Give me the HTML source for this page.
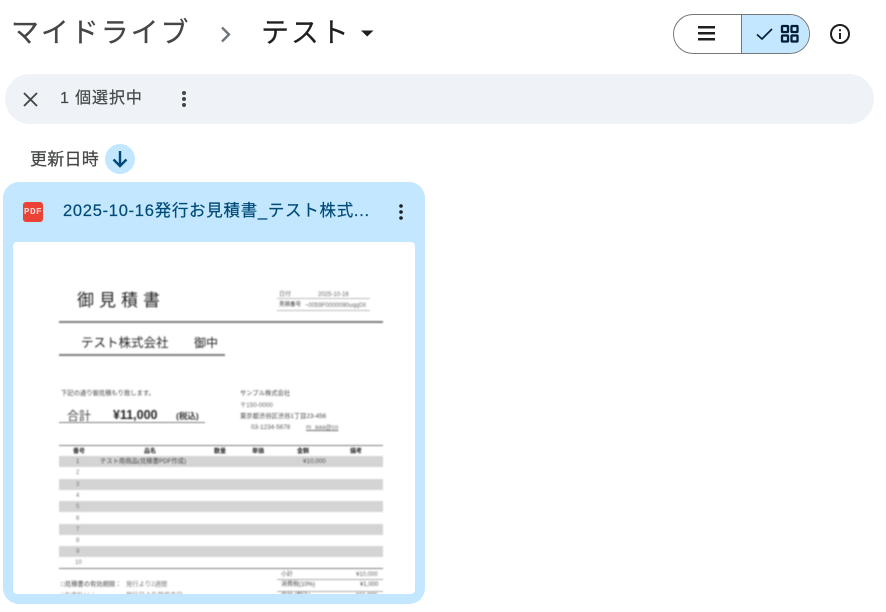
<!DOCTYPE html>
<html lang="ja"><head><meta charset="utf-8"><style>
html,body{margin:0;padding:0;width:886px;height:612px;background:#fff;overflow:hidden}
body{position:relative;font-family:"Liberation Sans","Noto Sans CJK JP",sans-serif}
.a{position:absolute;white-space:nowrap;line-height:1}
.d{position:absolute;white-space:nowrap;line-height:1;color:#222;font-family:"Liberation Sans","Noto Sans CJK JP",sans-serif}
.r{position:absolute;background:#7d7d7d}
.s{position:absolute;left:46px;width:324px;height:11px;background:#d4d4d4}
#doc{position:absolute;left:13px;top:242px;width:402px;height:352px;background:#fff;border-radius:4px;overflow:hidden}
#in{position:absolute;left:-13px;top:-242px;width:886px;height:612px;filter:blur(.8px)}
#in .s{left:59px}
</style></head><body>
<div class="a" style="left:11px;top:19px;font-size:28px;letter-spacing:1.9px;color:#444746;-webkit-text-stroke:.2px #444746">マイドライブ</div>
<svg class="a" style="left:215px;top:22px" width="22" height="24" viewBox="0 0 22 24"><path d="M7 5.500L14 12.500L7 19.500" fill="none" stroke="#70757a" stroke-width="2.400"/></svg>
<div class="a" style="left:261px;top:19px;font-size:28px;letter-spacing:1.9px;color:#1f1f1f;-webkit-text-stroke:.2px #1f1f1f">テスト</div>
<svg class="a" style="left:361px;top:30px" width="13" height="7"><path d="M0 0.500H12.500L6.200 6.500Z" fill="#1f1f1f"/></svg>

<div class="a" style="left:673px;top:14px;width:137px;height:40px;box-sizing:border-box;border:1px solid #747775;border-radius:20px;overflow:hidden;background:#fff">
<div style="position:absolute;left:67px;top:0;width:1px;height:38px;background:#747775"></div>
<div style="position:absolute;left:68px;top:0;width:68px;height:38px;background:#c2e7ff"></div>
</div>
<svg class="a" style="left:698px;top:25px" width="18" height="17"><path d="M0 1h17v2.500H0zM0 7h17v2.500H0zM0 13h17v2.500H0z" fill="#1f1f1f"/></svg>
<svg class="a" style="left:755px;top:27px" width="20" height="14"><path d="M2 7.500L7 12L17 2" fill="none" stroke="#001d35" stroke-width="1.700"/></svg>
<svg class="a" style="left:780px;top:24px" width="20" height="20" viewBox="0 0 20 20"><g fill="none" stroke="#001d35" stroke-width="2.300"><rect x="2" y="2" width="6" height="6" rx=".6"/><rect x="11.500" y="2" width="6" height="6" rx=".6"/><rect x="2" y="11.500" width="6" height="6" rx=".6"/><rect x="11.500" y="11.500" width="6" height="6" rx=".6"/></g></svg>
<svg class="a" style="left:829px;top:23px" width="22" height="22" viewBox="0 0 22 22"><circle cx="11" cy="11" r="9" fill="none" stroke="#1f1f1f" stroke-width="2"/><path d="M10 10h2v6h-2zM10 6.200h2v2h-2z" fill="#1f1f1f"/></svg>

<div class="a" style="left:5px;top:74px;width:869px;height:50px;border-radius:25px;background:#eff3f8"></div>
<svg class="a" style="left:22px;top:91px" width="17" height="17"><path d="M2 2L15 15M15 2L2 15" stroke="#444746" stroke-width="1.900" fill="none"/></svg>
<div class="a" style="left:60px;top:91px;font-size:16px;letter-spacing:.9px;color:#444746;-webkit-text-stroke:.2px #444746">1 個選択中</div>
<svg class="a" style="left:181px;top:90px" width="6" height="18"><circle cx="3" cy="3" r="2" fill="#444746"/><circle cx="3" cy="9" r="2" fill="#444746"/><circle cx="3" cy="15" r="2" fill="#444746"/></svg>

<div class="a" style="left:30px;top:151px;font-size:17px;letter-spacing:.25px;color:#444746;-webkit-text-stroke:.2px #444746">更新日時</div>
<div class="a" style="left:105px;top:144px;width:30px;height:30px;border-radius:50%;background:#c2e7ff"></div>
<svg class="a" style="left:112px;top:150px" width="16" height="18"><path d="M8 1V16M1.500 9.500L8 16L14.500 9.500" fill="none" stroke="#004a77" stroke-width="2.400"/></svg>

<div class="a" style="left:3px;top:182px;width:422px;height:422px;border-radius:16px;background:#c2e7ff"></div>
<div class="a" style="left:23px;top:202px;width:20px;height:20px;border-radius:3px;background:#ea4335"></div>
<div class="a" style="left:23px;top:207px;width:20px;text-align:center;font-size:9.500px;font-weight:700;letter-spacing:.4px;color:#f6d7d5;font-family:'Liberation Mono',monospace">PDF</div>
<div class="a" style="left:63px;top:203px;font-size:16.500px;letter-spacing:.72px;color:#004a77;-webkit-text-stroke:.2px #004a77">2025-10-16発行お見積書_テスト株式...</div>
<svg class="a" style="left:398px;top:203px" width="6" height="18"><circle cx="3" cy="3" r="1.800" fill="#1f1f1f"/><circle cx="3" cy="9" r="1.800" fill="#1f1f1f"/><circle cx="3" cy="15" r="1.800" fill="#1f1f1f"/></svg>

<div id="doc"><div id="in">
<div class="d" style="left:77px;top:292px;font-size:17px;letter-spacing:5px">御見積書</div>
<div class="d" style="left:279px;top:292px;font-size:6px;color:#666">日付</div>
<div class="d" style="left:318px;top:292px;font-size:6px;color:#666">2025-10-16</div>
<div class="d" style="left:279px;top:303px;font-size:5.500px;color:#333">見積番号</div>
<div class="d" style="left:305px;top:303px;font-size:6px;color:#666">~0059F0000090uqq0X</div>
<div class="r" style="left:277px;top:298px;width:93px;height:1px;background:#bbb"></div>
<div class="r" style="left:277px;top:310px;width:93px;height:1px;background:#bbb"></div>
<div class="r" style="left:59px;top:321px;width:324px;height:1.500px"></div>
<div class="d" style="left:81px;top:337px;font-size:12.500px">テスト株式会社</div>
<div class="d" style="left:194px;top:337px;font-size:12px">御中</div>
<div class="r" style="left:59px;top:354px;width:166px;height:1.500px"></div>
<div class="d" style="left:61px;top:391px;font-size:6.300px;color:#444">下記の通り御見積もり致します。</div>
<div class="d" style="left:240px;top:391px;font-size:6.300px;color:#444">サンプル株式会社</div>
<div class="d" style="left:240px;top:403px;font-size:6.300px;color:#666">〒150-0000</div>
<div class="d" style="left:240px;top:414px;font-size:6.300px;color:#444">東京都渋谷区渋谷1丁目23-456</div>
<div class="d" style="left:251px;top:425px;font-size:6.300px;color:#555">03-1234-5678</div>
<div class="d" style="left:306px;top:425px;font-size:6.300px;color:#666;text-decoration:underline">m_aaa@co</div>
<div class="d" style="left:67px;top:410px;font-size:12px;color:#444">合計</div>
<div class="d" style="left:113px;top:409px;font-size:12.500px;font-weight:700">¥11,000</div>
<div class="d" style="left:176px;top:412px;font-size:8.500px;font-weight:700;color:#333">(税込)</div>
<div class="r" style="left:59px;top:422px;width:146px;height:1px"></div>
<div class="r" style="left:59px;top:444.500px;width:324px;height:1.200px"></div>
<div class="d" style="left:73px;top:449px;font-size:6px;font-weight:700">番号</div>
<div class="d" style="left:144px;top:449px;font-size:6px;font-weight:700">品名</div>
<div class="d" style="left:214px;top:449px;font-size:6px;font-weight:700">数量</div>
<div class="d" style="left:252px;top:449px;font-size:6px;font-weight:700">単価</div>
<div class="d" style="left:297px;top:449px;font-size:6px;font-weight:700">金額</div>
<div class="d" style="left:350px;top:449px;font-size:6px;font-weight:700">備考</div>
<div class="s" style="top:456px"></div>
<div class="s" style="top:479px"></div>
<div class="s" style="top:501px"></div>
<div class="s" style="top:524px"></div>
<div class="s" style="top:546px"></div>
<div class="d" style="left:76px;top:459px;font-size:6px;color:#555">1</div>
<div class="d" style="left:76px;top:470px;font-size:6px;color:#777">2</div>
<div class="d" style="left:76px;top:482px;font-size:6px;color:#777">3</div>
<div class="d" style="left:76px;top:493px;font-size:6px;color:#777">4</div>
<div class="d" style="left:76px;top:504px;font-size:6px;color:#777">5</div>
<div class="d" style="left:76px;top:516px;font-size:6px;color:#777">6</div>
<div class="d" style="left:76px;top:527px;font-size:6px;color:#777">7</div>
<div class="d" style="left:76px;top:538px;font-size:6px;color:#777">8</div>
<div class="d" style="left:76px;top:549px;font-size:6px;color:#777">9</div>
<div class="d" style="left:75px;top:560px;font-size:6px;color:#777">10</div>
<div class="d" style="left:100px;top:459px;font-size:6.300px;color:#444">テスト用商品(見積書PDF作成)</div>
<div class="d" style="left:303px;top:459px;font-size:6.300px;color:#555">¥10,000</div>
<div class="r" style="left:59px;top:568px;width:324px;height:1px"></div>
<div class="d" style="left:281px;top:572px;font-size:6px;color:#555">小計</div>
<div class="d" style="left:356px;top:572px;font-size:6px;color:#666">¥10,000</div>
<div class="r" style="left:277px;top:579px;width:106px;height:1px;background:#aaa"></div>
<div class="d" style="left:281px;top:582px;font-size:6px;color:#444">消費税(10%)</div>
<div class="d" style="left:360px;top:582px;font-size:6px;color:#555">¥1,000</div>
<div class="r" style="left:277px;top:591px;width:106px;height:1px;background:#aaa"></div>
<div class="d" style="left:61px;top:582px;font-size:6.300px;color:#444">□見積書の有効期限：</div>
<div class="d" style="left:126px;top:582px;font-size:6.300px;color:#777">発行より2週間</div>
<div class="d" style="left:281px;top:593px;font-size:6px;color:#555">合計 (税込)</div>
<div class="d" style="left:356px;top:593px;font-size:6px;color:#555">¥11,000</div>
<div class="d" style="left:61px;top:593px;font-size:6.300px;color:#777">□お支払い：</div>
<div class="d" style="left:126px;top:593px;font-size:6.300px;color:#777">発行日より翌月末日</div>
</div></div>
</body></html>
